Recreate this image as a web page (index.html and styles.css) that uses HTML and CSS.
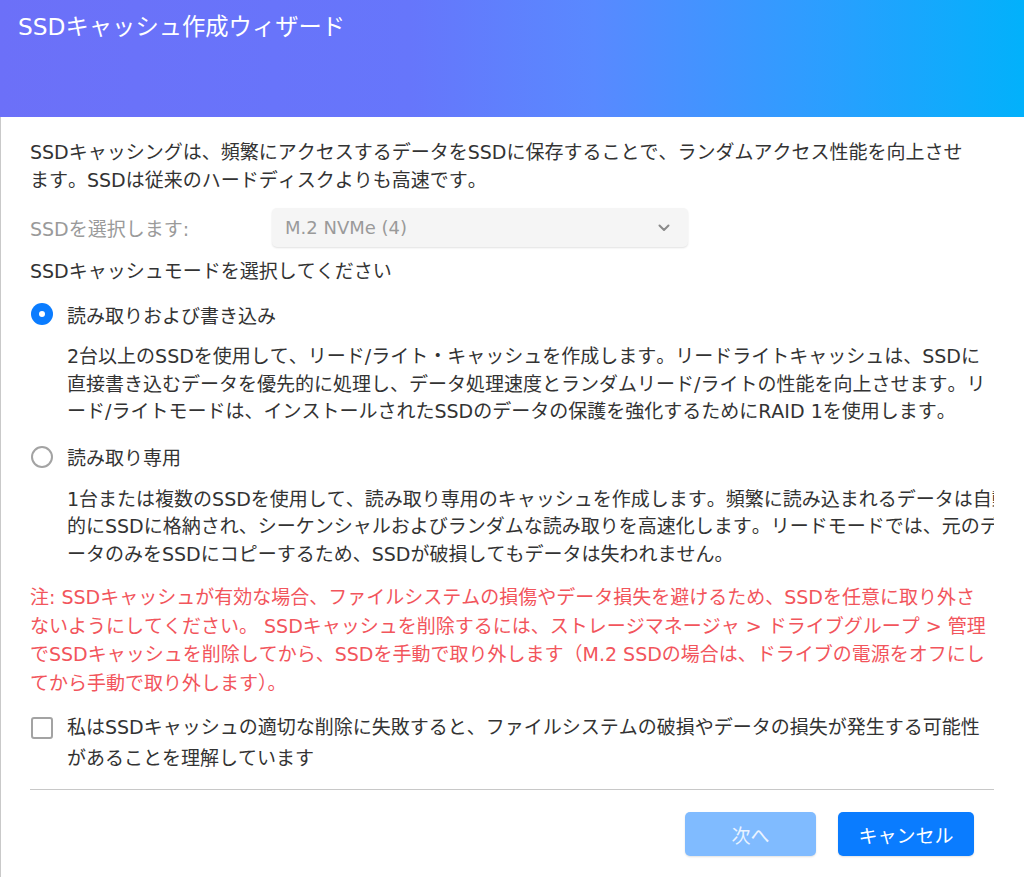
FILE: index.html
```html
<!DOCTYPE html>
<html lang="ja">
<head>
<meta charset="utf-8">
<title>SSDキャッシュ作成ウィザード</title>
<link rel="stylesheet" href="styles.css">
</head>
<body>
<div class="dialog">
  <header class="dialog-header">
    <h1 class="dialog-title">SSDキャッシュ作成ウィザード</h1>
  </header>
  <main class="dialog-body">
    <div class="content">
      <p class="intro">SSDキャッシングは、頻繁にアクセスするデータをSSDに保存することで、ランダムアクセス性能を向上させます。SSDは従来のハードディスクよりも高速です。</p>

      <div class="field-row">
        <span class="field-label">SSDを選択します:</span>
        <div class="select">
          <span class="select-value">M.2 NVMe (4)</span>
          <svg class="select-chevron" width="12" height="8" viewBox="0 0 12 8"><path d="M1.5 1.5 L6 6 L10.5 1.5" fill="none" stroke="#8a8a8a" stroke-width="2" stroke-linecap="round" stroke-linejoin="round"/></svg>
        </div>
      </div>

      <p class="section-heading">SSDキャッシュモードを選択してください</p>

      <div class="option">
        <div class="option-row">
          <span class="radio radio-checked"></span>
          <span class="option-label">読み取りおよび書き込み</span>
        </div>
        <p class="option-desc desc-rw">2台以上のSSDを使用して、リード/ライト・キャッシュを作成します。リードライトキャッシュは、SSDに直接書き込むデータを優先的に処理し、データ処理速度とランダムリード/ライトの性能を向上させます。リード/ライトモードは、インストールされたSSDのデータの保護を強化するためにRAID 1を使用します。</p>
      </div>

      <div class="option option-second">
        <div class="option-row">
          <span class="radio"></span>
          <span class="option-label">読み取り専用</span>
        </div>
        <p class="option-desc desc-ro">1台または複数のSSDを使用して、読み取り専用のキャッシュを作成します。頻繁に読み込まれるデータは自動的にSSDに格納され、シーケンシャルおよびランダムな読み取りを高速化します。リードモードでは、元のデータのみをSSDにコピーするため、SSDが破損してもデータは失われません。</p>
      </div>

      <p class="note">注: SSDキャッシュが有効な場合、ファイルシステムの損傷やデータ損失を避けるため、SSDを任意に取り外さないようにしてください。 SSDキャッシュを削除するには、ストレージマネージャ &gt; ドライブグループ &gt; 管理でSSDキャッシュを削除してから、SSDを手動で取り外します（M.2 SSDの場合は、ドライブの電源をオフにしてから手動で取り外します）。</p>

      <div class="confirm">
        <span class="checkbox"></span>
        <span class="confirm-text">私はSSDキャッシュの適切な削除に失敗すると、ファイルシステムの破損やデータの損失が発生する可能性があることを理解しています</span>
      </div>

      <div class="divider"></div>

      <div class="actions">
        <button class="btn btn-disabled" type="button">次へ</button>
        <button class="btn btn-primary" type="button">キャンセル</button>
      </div>
    </div>
  </main>
</div>
</body>
</html>
```

FILE: styles.css
```css
* { box-sizing: border-box; }

html, body {
  margin: 0;
  padding: 0;
  background: #ffffff;
}

body {
  font-family: "DejaVu Sans", "Noto Sans CJK JP", sans-serif;
  font-kerning: none;
  color: #333333;
  width: 1024px;
  height: 877px;
  overflow: hidden;
}

.dialog {
  width: 1024px;
  height: 877px;
  display: flex;
  flex-direction: column;
}

.dialog-header {
  height: 117px;
  flex: 0 0 117px;
  background: linear-gradient(90deg, #6c70f8 0%, #6676fb 40%, #5989ff 58%, #309cff 78%, #02b1fb 100%);
  padding: 11px 18px 0;
}

.dialog-title {
  margin: 0;
  font-size: 23.3px;
  font-weight: 400;
  color: #ffffff;
  line-height: 32px;
}

.dialog-body {
  flex: 1;
  border-left: 1px solid #c9c9c9;
  padding: 21px 0 0 29px;
  overflow: hidden;
}

.content {
  width: 964px;
  overflow: hidden;
  padding-bottom: 6px;
}

.content p { margin: 0; }

.intro {
  width: 945px;
  font-size: 19px;
  line-height: 28px;
}

.field-row {
  display: flex;
  align-items: center;
  margin-top: 14px;
  height: 39px;
}

.field-label {
  width: 242px;
  font-size: 19px;
  color: #9a9a9a;
}

.select {
  width: 416px;
  height: 39px;
  background: #f5f5f5;
  border-radius: 5px;
  box-shadow: 0 1px 2px rgba(0, 0, 0, 0.12);
  display: flex;
  align-items: center;
  justify-content: space-between;
  padding: 0 18px 0 13px;
}

.select-value {
  font-size: 18px;
  color: #9a9a9a;
}

.section-heading {
  margin-top: 10px !important;
  font-size: 19px;
  line-height: 28px;
}

.option { margin-top: 15px; }
.option-second { margin-top: 17px; }

.option-row {
  display: flex;
  align-items: center;
  height: 28px;
}

.radio {
  width: 22px;
  height: 22px;
  border-radius: 50%;
  border: 2px solid #a3a3a3;
  background: #ffffff;
  margin-left: 1px;
  flex: 0 0 22px;
  position: relative;
}

.radio-checked {
  border: none;
  background: #0a7cff;
}

.radio-checked::after {
  content: "";
  position: absolute;
  left: 8px;
  top: 8px;
  width: 6px;
  height: 6px;
  border-radius: 50%;
  background: #ffffff;
}

.option-label {
  margin-left: 14px;
  font-size: 19px;
}

.option-desc {
  margin: 15px 0 0 37px !important;
  font-size: 19px;
  line-height: 27.5px;
}

.desc-rw { width: 928px; }
.desc-ro { width: 948px; }

.note {
  margin-top: 15px !important;
  width: 960px;
  font-size: 19px;
  line-height: 28.5px;
  color: #f2555c;
}

.confirm {
  display: flex;
  align-items: flex-start;
  margin-top: 15px;
}

.checkbox {
  width: 22px;
  height: 22px;
  flex: 0 0 22px;
  border: 2px solid #a3a3a3;
  border-radius: 3px;
  margin: 5px 0 0 1px;
  background: #ffffff;
}

.confirm-text {
  margin-left: 14px;
  width: 925px;
  font-size: 19px;
  line-height: 31px;
}

.divider {
  margin-top: 15px;
  width: 964px;
  height: 1px;
  background: #c8c8c8;
}

.actions {
  display: flex;
  justify-content: flex-end;
  gap: 22px;
  width: 944px;
  margin-top: 22px;
}

.btn {
  height: 44px;
  border: none;
  border-radius: 5px;
  font-family: inherit;
  font-size: 19px;
  color: #ffffff;
  padding: 0;
  box-shadow: 0 1px 2px rgba(0, 0, 0, 0.12);
}

.btn-disabled {
  width: 131px;
  background: #80bbff;
  color: #eaf3ff;
}

.btn-primary {
  width: 136px;
  background: #0a7cff;
}
```
